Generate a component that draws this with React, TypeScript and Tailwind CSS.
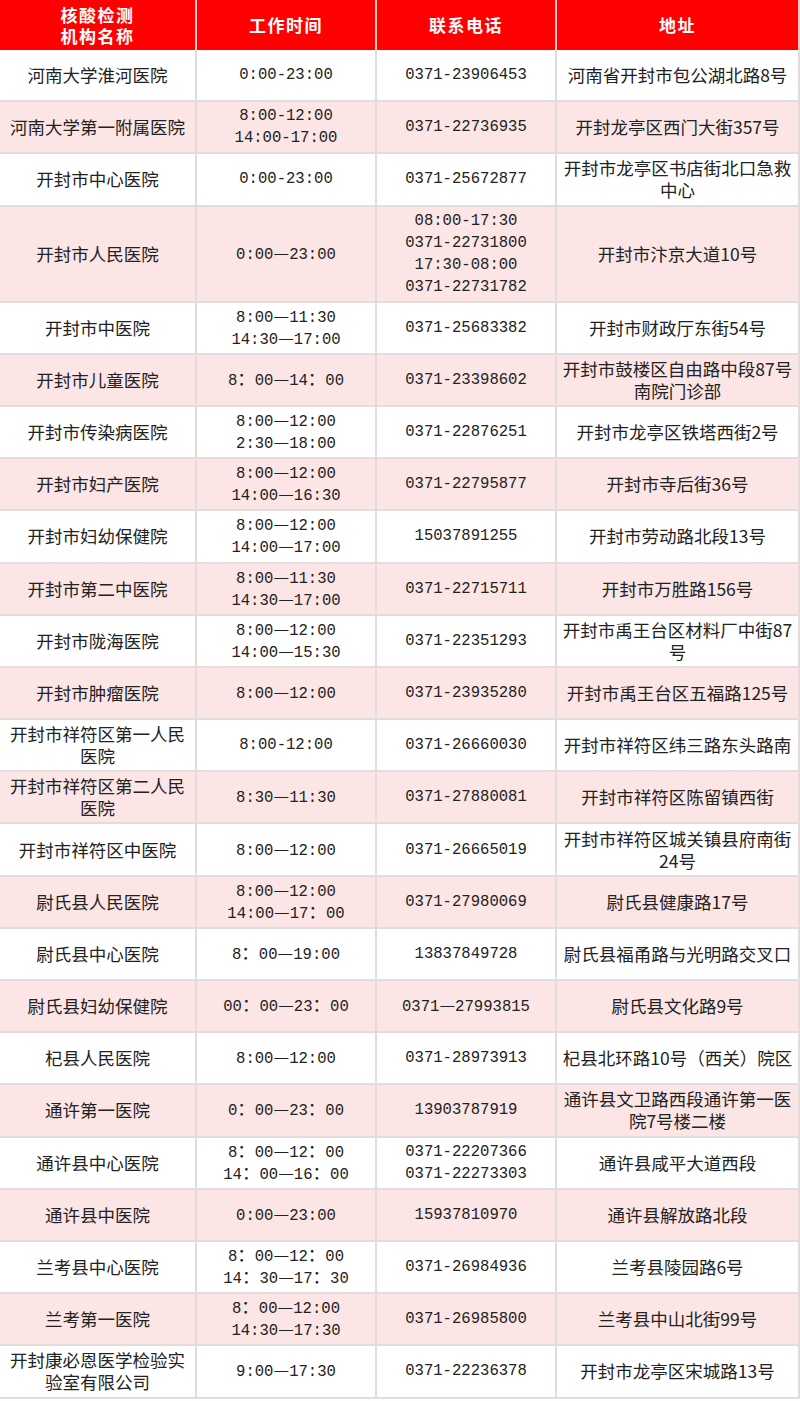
import React from "react";

type Row = { name: string[]; time: string[]; phone: string[]; addr: string[]; tall?: boolean };

const ROWS: Row[] = [
  { name: ["河南大学淮河医院"], time: ["0:00-23:00"], phone: ["0371-23906453"], addr: ["河南省开封市包公湖北路8号"] },
  { name: ["河南大学第一附属医院"], time: ["8:00-12:00", "14:00-17:00"], phone: ["0371-22736935"], addr: ["开封龙亭区西门大街357号"] },
  { name: ["开封市中心医院"], time: ["0:00-23:00"], phone: ["0371-25672877"], addr: ["开封市龙亭区书店街北口急救", "中心"] },
  {
    name: ["开封市人民医院"],
    time: ["0:00—23:00"],
    phone: ["08:00-17:30", "0371-22731800", "17:30-08:00", "0371-22731782"],
    addr: ["开封市汴京大道10号"],
    tall: true,
  },
  { name: ["开封市中医院"], time: ["8:00—11:30", "14:30—17:00"], phone: ["0371-25683382"], addr: ["开封市财政厅东街54号"] },
  { name: ["开封市儿童医院"], time: ["8：00—14：00"], phone: ["0371-23398602"], addr: ["开封市鼓楼区自由路中段87号", "南院门诊部"] },
  { name: ["开封市传染病医院"], time: ["8:00—12:00", "2:30—18:00"], phone: ["0371-22876251"], addr: ["开封市龙亭区铁塔西街2号"] },
  { name: ["开封市妇产医院"], time: ["8:00—12:00", "14:00—16:30"], phone: ["0371-22795877"], addr: ["开封市寺后街36号"] },
  { name: ["开封市妇幼保健院"], time: ["8:00—12:00", "14:00—17:00"], phone: ["15037891255"], addr: ["开封市劳动路北段13号"] },
  { name: ["开封市第二中医院"], time: ["8:00—11:30", "14:30—17:00"], phone: ["0371-22715711"], addr: ["开封市万胜路156号"] },
  { name: ["开封市陇海医院"], time: ["8:00—12:00", "14:00—15:30"], phone: ["0371-22351293"], addr: ["开封市禹王台区材料厂中街87", "号"] },
  { name: ["开封市肿瘤医院"], time: ["8:00—12:00"], phone: ["0371-23935280"], addr: ["开封市禹王台区五福路125号"] },
  { name: ["开封市祥符区第一人民", "医院"], time: ["8:00-12:00"], phone: ["0371-26660030"], addr: ["开封市祥符区纬三路东头路南"] },
  { name: ["开封市祥符区第二人民", "医院"], time: ["8:30—11:30"], phone: ["0371-27880081"], addr: ["开封市祥符区陈留镇西街"] },
  { name: ["开封市祥符区中医院"], time: ["8:00—12:00"], phone: ["0371-26665019"], addr: ["开封市祥符区城关镇县府南街", "24号"] },
  { name: ["尉氏县人民医院"], time: ["8:00—12:00", "14:00—17：00"], phone: ["0371-27980069"], addr: ["尉氏县健康路17号"] },
  { name: ["尉氏县中心医院"], time: ["8：00—19:00"], phone: ["13837849728"], addr: ["尉氏县福甬路与光明路交叉口"] },
  { name: ["尉氏县妇幼保健院"], time: ["00：00—23：00"], phone: ["0371—27993815"], addr: ["尉氏县文化路9号"] },
  { name: ["杞县人民医院"], time: ["8:00—12:00"], phone: ["0371-28973913"], addr: ["杞县北环路10号（西关）院区"] },
  { name: ["通许第一医院"], time: ["0：00—23：00"], phone: ["13903787919"], addr: ["通许县文卫路西段通许第一医", "院7号楼二楼"] },
  { name: ["通许县中心医院"], time: ["8：00—12：00", "14：00—16：00"], phone: ["0371-22207366", "0371-22273303"], addr: ["通许县咸平大道西段"] },
  { name: ["通许县中医院"], time: ["0:00—23:00"], phone: ["15937810970"], addr: ["通许县解放路北段"] },
  { name: ["兰考县中心医院"], time: ["8：00—12：00", "14：30—17：30"], phone: ["0371-26984936"], addr: ["兰考县陵园路6号"] },
  { name: ["兰考第一医院"], time: ["8：00—12:00", "14:30—17:30"], phone: ["0371-26985800"], addr: ["兰考县中山北街99号"] },
  { name: ["开封康必恩医学检验实", "验室有限公司"], time: ["9:00—17:30"], phone: ["0371-22236378"], addr: ["开封市龙亭区宋城路13号"] },
];

const COLS = "grid grid-cols-[197px_180px_180px_243px]";

// full-width marks are set in the CJK face so they keep their wide advance
function Mono({ text }: { text: string }) {
  const parts = text.split(/([：—])/);
  return (
    <>
      {parts.map((p, i) =>
        p === "：" || p === "—" ? (
          <span key={i} className="font-['Noto_Sans_CJK_SC',sans-serif] text-[17.5px] leading-none">{p}</span>
        ) : (
          <React.Fragment key={i}>{p}</React.Fragment>
        )
      )}
    </>
  );
}

function Cell({ lines, mono }: { lines: string[]; mono?: boolean }) {
  return (
    <div
      className={`flex flex-col items-center justify-center text-center text-[#222] border-b-2 border-r-2 border-[#e4dcdc] ${
        mono
          ? "font-['Liberation_Mono','Noto_Sans_CJK_SC',monospace] text-[15.6px]"
          : "font-['Noto_Sans_CJK_SC',sans-serif] text-[17.5px]"
      }`}
    >
      {lines.map((l, i) => (
        <div key={i} className="h-[22px] leading-[22px] whitespace-nowrap">
          {mono ? <Mono text={l} /> : l}
        </div>
      ))}
    </div>
  );
}

export default function App() {
  return (
    <div className="w-[800px] h-[1401px] bg-white">
      {/* Header */}
      <div className={`${COLS} h-[50px] bg-[#fe0000] text-white font-bold text-[17px] tracking-[1.5px] font-['Noto_Sans_CJK_SC',sans-serif]`}>
        <div className="flex flex-col items-center justify-center border-r-2 border-[#f6c8c8]">
          <div className="h-[21px] leading-[21px]">核酸检测</div>
          <div className="h-[21px] leading-[21px]">机构名称</div>
        </div>
        <div className="flex items-center justify-center border-r-2 border-[#f6c8c8]">工作时间</div>
        <div className="flex items-center justify-center border-r-2 border-[#f6c8c8]">联系电话</div>
        <div className="flex items-center justify-center border-r-2 border-[#f6c8c8]">地址</div>
      </div>

      {/* Rows */}
      {ROWS.map((r, i) => (
        <div
          key={i}
          className={`${COLS} ${r.tall ? "h-[96px]" : "h-[52.2px]"} ${i % 2 === 1 ? "bg-[#fce5e5]" : "bg-white"}`}
        >
          <Cell lines={r.name} />
          <Cell lines={r.time} mono />
          <Cell lines={r.phone} mono />
          <Cell lines={r.addr} />
        </div>
      ))}
    </div>
  );
}
